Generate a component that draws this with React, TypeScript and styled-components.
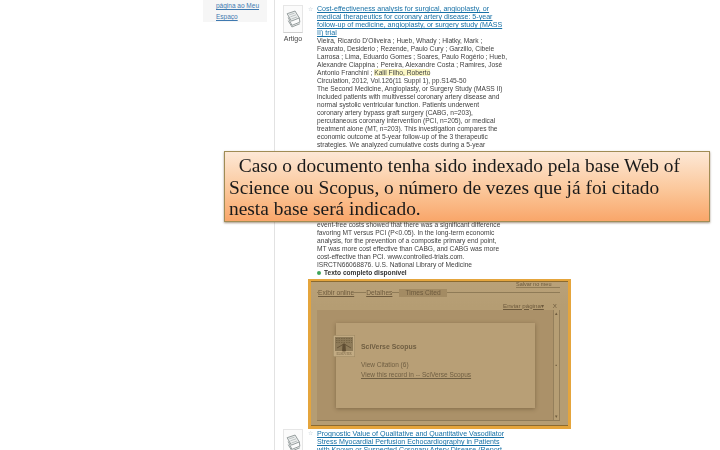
import { FC } from "react";
import styled, { createGlobalStyle } from "styled-components";

const GlobalStyle = createGlobalStyle`
  html, body {
    margin: 0;
    padding: 0;
    background: #fff;
  }
`;

const Slide = styled.div`
  position: relative;
  width: 720px;
  height: 450px;
  overflow: hidden;
  background: #fff;
  font-family: "Liberation Sans", Arial, sans-serif;
`;

const Page = styled.div`
  display: flex;
  align-items: flex-start;
  padding-left: 203px;
  height: 450px;
  filter: blur(0.4px);
`;

const Sidebar = styled.div`
  width: 64px;
  height: 22px;
  flex-shrink: 0;
  background: #f6f6f6;
  padding-left: 13px;
  box-sizing: border-box;
  margin-right: 7px;
  font-size: 6.5px;
  line-height: 11px;
  color: #3f79b0;
  text-decoration: underline;
`;

const Results = styled.div`
  border-left: 1px solid #e2e2e2;
  height: 450px;
  padding-left: 8px;
  padding-top: 5px;
  box-sizing: border-box;
`;

const Result = styled.div`
  display: flex;
`;

const ThumbColumn = styled.div`
  width: 24px;
  flex-shrink: 0;
  margin-left: -2px;
  margin-right: 4px;
  font-size: 7px;
  color: #444;
  text-align: center;
`;

const Thumb = styled.div`
  width: 20px;
  height: 28px;
  margin: 0 auto 2px;
  border: 1px solid #e6e6e6;
  border-bottom-color: #cfcfcf;
  box-sizing: border-box;
  background: #fbfbfb;
  display: flex;
  align-items: center;
  justify-content: center;
`;

const Star = styled.span`
  width: 9px;
  flex-shrink: 0;
  margin-left: -1px;
  color: #b8c4cc;
  font-size: 6px;
  line-height: 8px;
`;

const Body = styled.div`
  width: 200px;
`;

const NextBody = styled(Body)`
  padding-top: 1px;
`;

const Line = styled.div<{ $kind?: "title" | "text" }>`
  height: 8px;
  line-height: 8px;
  white-space: nowrap;
  font-size: ${({ $kind }) => ($kind === "title" ? "7.1px" : "6.65px")};
  color: ${({ $kind }) => ($kind === "title" ? "#1670a6" : "#3f3f3f")};
  text-decoration: ${({ $kind }) => ($kind === "title" ? "underline" : "none")};
`;

/* the lines under the callout can't be read in the picture, so just keep their room */
const CoveredLines = styled.div`
  height: 72px;
`;

const Mark = styled.span`
  background: #fbf7c4;
`;

const FullText = styled.div`
  height: 8px;
  line-height: 8px;
  font-size: 6.6px;
  font-weight: 700;
  color: #333;
  white-space: nowrap;
  display: flex;
  align-items: center;
  gap: 3px;
`;

const GreenDot = styled.span`
  width: 4px;
  height: 4px;
  border-radius: 50%;
  background: #3fa45a;
`;

const Panel = styled.div`
  width: 263px;
  height: 150px;
  margin: 2px 0 0 -9px;
  box-sizing: border-box;
  background: linear-gradient(#b9a179, #b59d73 25px);
  border: 3px solid #e5a53c;
  border-top-width: 2px;
  box-shadow: inset 0 1px 0 #8a6a30, inset 0 -1px 0 #8a6a30;
  padding: 3px 8px 5px 6px;
  display: flex;
  flex-direction: column;
  color: #6d5a3d;
  font-size: 6.65px;
`;

const TopLink = styled.div`
  align-self: flex-end;
  margin: -2px 0 0 0;
  height: 5px;
  line-height: 5px;
  font-size: 5.5px;
  width: 44px;
  border-bottom: 1px solid #8f7b57;
`;

const TabRow = styled.div`
  display: flex;
  align-items: center;
  height: 8px;
  margin-top: 1px;
  padding-left: 1px;
  background: linear-gradient(#0000 3.5px, #8f7b57 3.5px, #8f7b57 4.5px, #0000 4.5px);
`;

const Tab = styled.span<{ $active?: boolean }>`
  height: 8px;
  line-height: 8px;
  padding: 0 ${({ $active }) => ($active ? "6px" : "0")};
  margin-right: ${({ $active }) => ($active ? "0" : "12px")};
  margin-left: ${({ $active }) => ($active ? "-5px" : "0")};
  background: ${({ $active }) => ($active ? "#a38b63" : "#b8a077")};
  text-decoration: ${({ $active }) => ($active ? "none" : "underline")};
`;

const ActionRow = styled.div`
  display: flex;
  justify-content: flex-end;
  align-items: center;
  gap: 9px;
  height: 10px;
  margin-top: 3px;
  padding-right: 3px;
  font-size: 6.2px;
`;

const ActionLink = styled.span`
  text-decoration: underline;
`;

const Frame = styled.div`
  flex: 1;
  display: flex;
  background: #ab9169;
  border-bottom: 1px solid #8f7b57;
`;

const FrameBody = styled.div`
  flex: 1;
  padding: 13px 18px 12px 19px;
  display: flex;
`;

const Scrollbar = styled.div`
  width: 7px;
  box-sizing: border-box;
  border-left: 1px solid #947f5b;
  border-right: 1px solid #947f5b;
  background: #b69e74;
  display: flex;
  flex-direction: column;
  justify-content: space-between;
  align-items: center;
  font-size: 5px;
  line-height: 7px;
`;

const Card = styled.div`
  flex: 1;
  background: #b89f76;
  box-shadow: 0 1px 4px rgba(80, 60, 30, 0.45);
  padding: 12px 0 0 0;
  display: flex;
  gap: 6px;
`;

const Logo = styled.div`
  width: 22px;
  height: 22px;
  margin-left: -3px;
  flex-shrink: 0;
`;

const CardText = styled.div`
  padding-top: 7px;
  color: #6f5e42;
  font-size: 6.5px;
`;

const CardTitle = styled.div`
  font-size: 6.9px;
  font-weight: 700;
  line-height: 9px;
  margin-bottom: 9px;
`;

const CardLine = styled.div<{ $link?: boolean }>`
  line-height: 10px;
  white-space: nowrap;
  text-decoration: ${({ $link }) => ($link ? "underline" : "none")};
`;

const Callout = styled.div`
  position: absolute;
  left: 224px;
  top: 151px;
  width: 486px;
  height: 71px;
  box-sizing: border-box;
  padding: 3px 0 0 4px;
  border: 1px solid #a08c55;
  background: linear-gradient(#fde8d6, #fbc79a 55%, #f9a66a);
  box-shadow: 0 1px 2px rgba(90, 60, 30, 0.55);
  font-family: "Liberation Serif", "DejaVu Serif", serif;
  font-size: 19.4px;
  line-height: 21.5px;
  color: #1a1a1a;
  white-space: pre;
  filter: blur(0.25px);
`;

const DocIcon: FC = () => (
  <svg width="15" height="18" viewBox="0 0 14 17" fill="none" stroke="#8f9898" strokeWidth="0.9">
    <path d="M1 3.5 L8.5 1 L12.5 7.5 L5 10.5 Z" fill="#eef0f0" />
    <path d="M3 4.5 L8 3 M4 6.5 L9.5 4.5 M5 8.5 L10.5 6.5" strokeWidth="0.5" />
    <path d="M2 7 L5.5 14.5 L13 11.5 L12.5 7.5" />
    <path d="M2 10 L5.5 16 L13 13" />
  </svg>
);

const ElsevierLogo: FC = () => (
  <svg width="22" height="22" viewBox="0 0 22 22">
    <rect x="0.3" y="0.3" width="21.4" height="21.4" fill="#c2ab83" stroke="#a08a64" strokeWidth="0.6" />
    <rect x="2" y="2" width="18" height="14" fill="#8d7a58" />
    <path d="M3 3.5 H19 M3 5.5 H19 M3 7.5 H19" stroke="#6f5c3d" strokeWidth="0.7" strokeDasharray="1.5 1" />
    <path d="M10 9 H12 L12.5 16 H9.5 Z M4 13 L10 9.5 M18 13 L12 9.5" stroke="#5f4e33" strokeWidth="0.8" fill="#5f4e33" />
    <text x="11" y="20.3" textAnchor="middle" fontSize="3.2" fill="#6f5c3d" fontFamily="Liberation Serif, serif">
      ELSEVIER
    </text>
  </svg>
);

const firstTitle = [
  "Cost-effectiveness analysis for surgical, angioplasty, or",
  "medical therapeutics for coronary artery disease: 5-year",
  "follow-up of medicine, angioplasty, or surgery study (MASS",
  "II) trial",
];

const textAbove = [
  "The Second Medicine, Angioplasty, or Surgery Study (MASS II)",
  "included patients with multivessel coronary artery disease and",
  "normal systolic ventricular function. Patients underwent",
  "coronary artery bypass graft surgery (CABG, n=203),",
  "percutaneous coronary intervention (PCI, n=205), or medical",
  "treatment alone (MT, n=203). This investigation compares the",
  "economic outcome at 5-year follow-up of the 3 therapeutic",
  "strategies. We analyzed cumulative costs during a 5-year",
];

const textBelow = [
  "event-free costs showed that there was a significant difference",
  "favoring MT versus PCI (P<0.05). In the long-term economic",
  "analysis, for the prevention of a composite primary end point,",
  "MT was more cost effective than CABG, and CABG was more",
  "cost-effective than PCI. www.controlled-trials.com.",
  "ISRCTN66068876. U.S. National Library of Medicine",
];

const App: FC = () => (
  <Slide>
    <GlobalStyle />
    <Page>
      <Sidebar>
        página ao Meu
        <br />
        Espaço
      </Sidebar>
      <Results>
        <Result>
          <ThumbColumn>
            <Thumb>
              <DocIcon />
            </Thumb>
            Artigo
          </ThumbColumn>
          <Star>☆</Star>
          <Body>
            {firstTitle.map((t) => (
              <Line key={t} $kind="title">
                {t}
              </Line>
            ))}
            <Line>Vieira, Ricardo D'Oliveira ; Hueb, Whady ; Hlatky, Mark ;</Line>
            <Line>Favarato, Desiderio ; Rezende, Paulo Cury ; Garzillo, Cibele</Line>
            <Line>Larrosa ; Lima, Eduardo Gomes ; Soares, Paulo Rogério ; Hueb,</Line>
            <Line>Alexandre Ciappina ; Pereira, Alexandre Costa ; Ramires, José</Line>
            <Line>
              Antonio Franchini ; <Mark>Kalil Filho, Roberto</Mark>
            </Line>
            <Line>Circulation, 2012, Vol.126(11 Suppl 1), pp.S145-50</Line>
            {textAbove.map((t) => (
              <Line key={t}>{t}</Line>
            ))}
            <CoveredLines />
            {textBelow.map((t) => (
              <Line key={t}>{t}</Line>
            ))}
            <FullText>
              <GreenDot />
              Texto completo disponível
            </FullText>
            <Panel>
              <TopLink>Salvar no meu</TopLink>
              <TabRow>
                <Tab>Exibir online</Tab>
                <Tab>Detalhes</Tab>
                <Tab $active>Times Cited</Tab>
              </TabRow>
              <ActionRow>
                <ActionLink>Enviar página▾</ActionLink>
                <span>X</span>
              </ActionRow>
              <Frame>
                <FrameBody>
                  <Card>
                    <Logo>
                      <ElsevierLogo />
                    </Logo>
                    <CardText>
                      <CardTitle>SciVerse Scopus</CardTitle>
                      <CardLine>View Citation (6)</CardLine>
                      <CardLine $link>View this record in -- SciVerse Scopus</CardLine>
                    </CardText>
                  </Card>
                </FrameBody>
                <Scrollbar>
                  <span>▴</span>
                  <span>▪</span>
                  <span>▾</span>
                </Scrollbar>
              </Frame>
            </Panel>
          </Body>
        </Result>
        <Result>
          <ThumbColumn>
            <Thumb>
              <DocIcon />
            </Thumb>
          </ThumbColumn>
          <Star>☆</Star>
          <NextBody>
            <Line $kind="title">Prognostic Value of Qualitative and Quantitative Vasodilator</Line>
            <Line $kind="title">Stress Myocardial Perfusion Echocardiography in Patients</Line>
            <Line $kind="title">with Known or Suspected Coronary Artery Disease (Report</Line>
          </NextBody>
        </Result>
      </Results>
    </Page>
    <Callout>
      {"  Caso o documento tenha sido indexado pela base Web of\nScience ou Scopus, o número de vezes que já foi citado\nnesta base será indicado."}
    </Callout>
  </Slide>
);

export default App;
